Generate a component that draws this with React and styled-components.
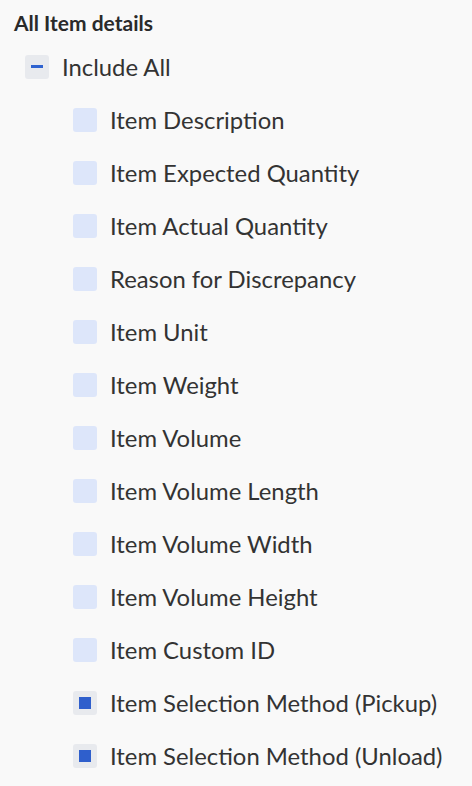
import React from 'react'
import styled, { createGlobalStyle } from 'styled-components'

const GlobalStyle = createGlobalStyle`
  html, body {
    margin: 0;
    padding: 0;
    background: #f9f9f9;
    font-family: Lato, "Open Sans", sans-serif;
  }
`

const items = [
  { label: 'Item Description', checked: false },
  { label: 'Item Expected Quantity', checked: false },
  { label: 'Item Actual Quantity', checked: false },
  { label: 'Reason for Discrepancy', checked: false },
  { label: 'Item Unit', checked: false },
  { label: 'Item Weight', checked: false },
  { label: 'Item Volume', checked: false },
  { label: 'Item Volume Length', checked: false },
  { label: 'Item Volume Width', checked: false },
  { label: 'Item Volume Height', checked: false },
  { label: 'Item Custom ID', checked: false },
  { label: 'Item Selection Method (Pickup)', checked: true },
  { label: 'Item Selection Method (Unload)', checked: true }
]

function Checkbox({ state }) {
  return (
    <Box state={state}>
      {state === 'partial' && <Dash />}
      {state === 'checked' && <Dot />}
    </Box>
  )
}

export default function App() {
  return (
    <Page>
      <GlobalStyle />
      <Title>All Item details</Title>
      <Row>
        <Checkbox state="partial" />
        <Label>Include All</Label>
      </Row>
      <List>
        {items.map(item => (
          <Row key={item.label}>
            <Checkbox state={item.checked ? 'checked' : 'empty'} />
            <Label>{item.label}</Label>
          </Row>
        ))}
      </List>
    </Page>
  )
}

const Page = styled.div`
  width: 472px;
  min-height: 786px;
  box-sizing: border-box;
  padding: 10px 0 0 14px;
  background: #f9f9f9;
  color: #2b2b2b;
`

const Title = styled.h1`
  margin: 0 0 4px;
  font-size: 21px;
  font-weight: 700;
  line-height: 26px;
  color: #2a2a2a;
`

const List = styled.div`
  padding-left: 48px;
`

const Row = styled.div`
  display: flex;
  align-items: center;
  gap: 13px;
  height: 53px;
  padding-left: 11px;
`

const Label = styled.span`
  font-size: 23.85px;
  color: #333;
  white-space: nowrap;
`

const Box = styled.span`
  flex: none;
  width: 24px;
  height: 24px;
  border-radius: 3px;
  display: flex;
  align-items: center;
  justify-content: center;
  background: ${p => (p.state === 'empty' ? '#dde6fa' : '#e8eaee')};
`

const Dash = styled.span`
  width: 12px;
  height: 3px;
  background: #2f63d0;
`

const Dot = styled.span`
  width: 12px;
  height: 12px;
  background: #2f5fcc;
`
